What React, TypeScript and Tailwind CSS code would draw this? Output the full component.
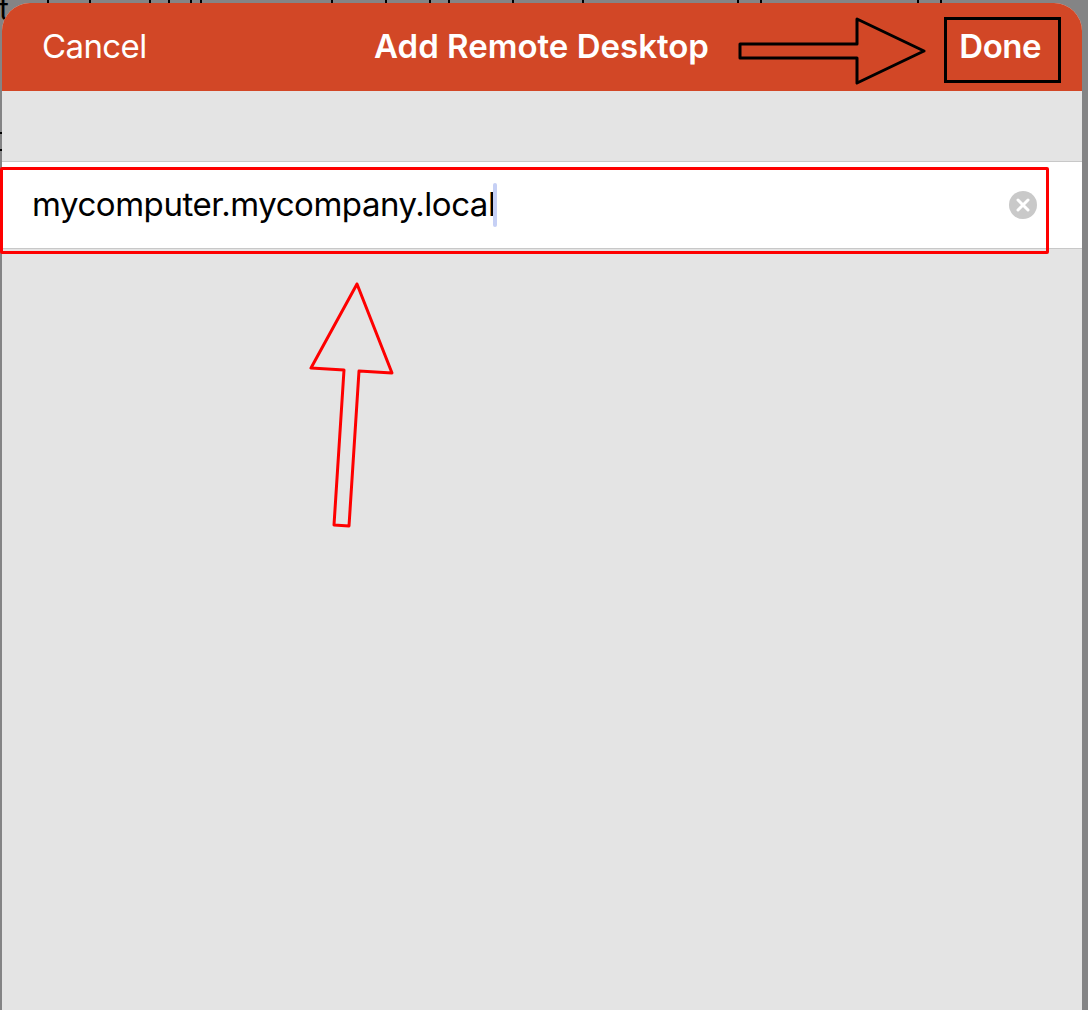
import React from 'react';

// Tiny text descenders from the page behind the sheet
const topMarks = [47, 89, 149, 168, 190, 200, 331, 385, 429, 448, 512, 582, 737, 760, 917, 940];

export default function App() {
  return (
    <div className="relative h-[1010px] w-[1088px] overflow-hidden bg-[#848485] pt-[3px] pl-[2px] pr-[6px] font-['Inter','Liberation_Sans',sans-serif]">
      {/* Page behind the sheet */}
      <span className="absolute left-[-1px] top-[-9px] text-[30px] leading-[36px] text-black">t</span>
      {topMarks.map((x) => (
        <span key={x} className="absolute top-0 h-[3px] w-[2px] bg-black" style={{ left: x }} />
      ))}
      <span className="absolute left-0 top-[132px] h-[2px] w-[2px] bg-black" />
      <span className="absolute left-0 top-[149px] h-[2px] w-[2px] bg-black" />

      {/* Sheet */}
      <div className="relative flex h-[1007px] w-[1080px] flex-col overflow-hidden rounded-t-[28px] bg-[#e4e4e4]">
        <div className="grid h-[88px] grid-cols-[1fr_auto_1fr] items-center bg-[#d24726] pl-[40px] pr-[41px] text-white">
          <span className="text-[33px] tracking-[-0.6px]">Cancel</span>
          <span className="text-[33px] font-semibold">Add Remote Desktop</span>
          <span className="justify-self-end text-[33px] font-semibold tracking-[-0.5px]">Done</span>
        </div>
        <div className="mt-[70px] flex h-[88px] items-center justify-between border-y border-[#c8c8c8] bg-white pl-[30px] pr-[45px]">
          <div className="flex items-center">
            <span className="text-[33px] tracking-[-0.45px] text-black">mycomputer.mycompany.local</span>
            <span className="-ml-[3px] h-[44px] w-[4px] rounded-full bg-[#c6d0f5]" />
          </div>
          <span className="flex h-[28px] w-[28px] items-center justify-center rounded-full bg-[#c9c9c9]">
            <svg width="14" height="14" viewBox="0 0 14 14" fill="none" stroke="white" strokeWidth="3" strokeLinecap="round">
              <path d="M2 2l10 10M12 2L2 12" />
            </svg>
          </span>
        </div>
      </div>

      {/* Annotations drawn over the screenshot */}
      <div className="absolute left-0 top-[167px] h-[87px] w-[1049px] rounded-[2px] border-[3px] border-[#fe0000]" />
      <div className="absolute left-[944px] top-[17px] h-[66px] w-[117px] border-[3px] border-black" />
      <svg className="absolute left-0 top-0" width="1088" height="1010" fill="none" strokeLinejoin="round">
        <path d="M740 44H857V19L924 51L857 83V58H740Z" stroke="#000" strokeWidth="3" />
        <path d="M357 284L311 368L344 370L334 525L349 526L359 371L392 373Z" stroke="#fe0000" strokeWidth="3" />
      </svg>
    </div>
  );
}
